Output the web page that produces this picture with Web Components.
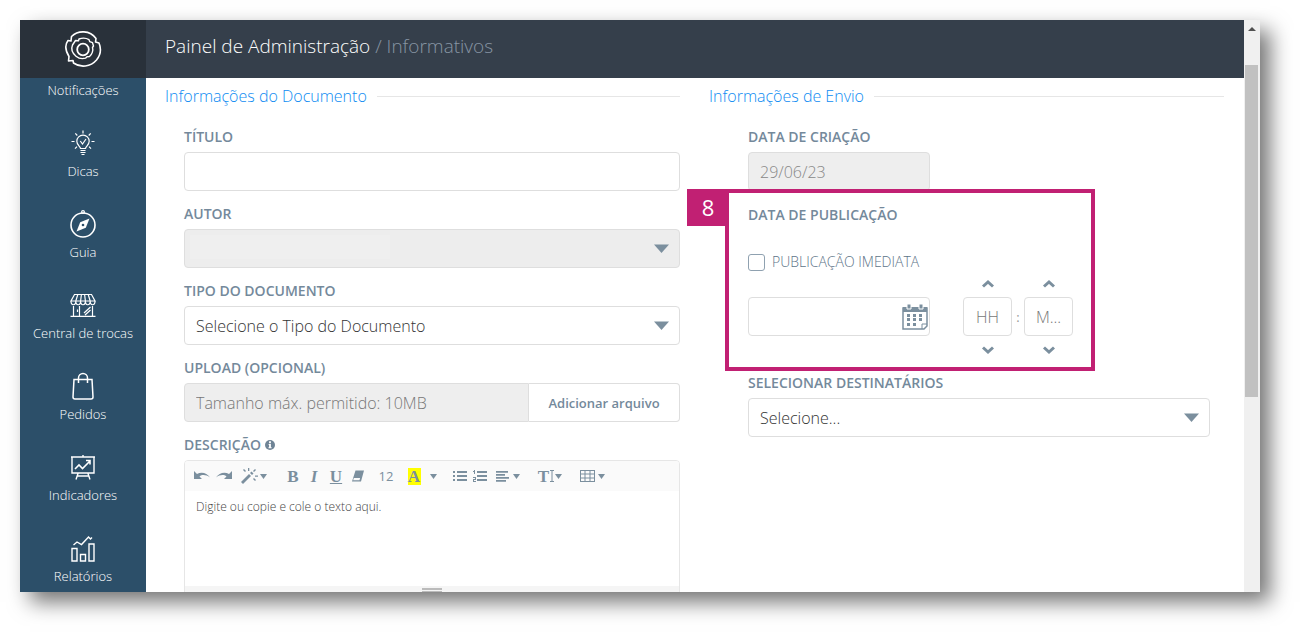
<!DOCTYPE html>
<html lang="pt-BR">
<head>
<meta charset="utf-8">
<title>Painel de Administração</title>
<style>
  body {
    margin: 0;
    padding: 20px 40px 40px 20px;
    box-sizing: border-box;
    height: 100vh;
    overflow: hidden;
    background: #fff;
    font-family: "Open Sans", "Noto Sans", sans-serif;
    color: #555;
  }
</style>
</head>
<body>
  <admin-panel>
    <side-bar slot="sidebar">
      <nav-item label="Notificações"></nav-item>
      <nav-item label="Dicas" icon="dicas"></nav-item>
      <nav-item label="Guia" icon="guia"></nav-item>
      <nav-item label="Central de trocas" icon="trocas"></nav-item>
      <nav-item label="Pedidos" icon="pedidos"></nav-item>
      <nav-item label="Indicadores" icon="indicadores"></nav-item>
      <nav-item label="Relatórios" icon="relatorios"></nav-item>
    </side-bar>
    <page-header slot="header" section="Painel de Administração" page="Informativos"></page-header>
    <form-section titulo="Informações do Documento">
      <text-field label="TÍTULO"></text-field>
      <select-field label="AUTOR" disabled></select-field>
      <select-field label="TIPO DO DOCUMENTO" option="Selecione o Tipo do Documento"></select-field>
      <upload-field label="UPLOAD (OPCIONAL)"></upload-field>
      <editor-field label="DESCRIÇÃO"></editor-field>
    </form-section>
    <form-section titulo="Informações de Envio" class="inset">
      <text-field label="DATA DE CRIAÇÃO" value="29/06/23" class="short" disabled></text-field>
      <call-out number="8">
        <publish-date></publish-date>
      </call-out>
      <select-field label="SELECIONAR DESTINATÁRIOS" option="Selecione..."></select-field>
    </form-section>
  </admin-panel>

<script>
  // Estilos comunes a todos los campos del formulario
  const fieldStyles = `
    :host { display: block; }
    * { box-sizing: border-box; }
    label, .label {
      display: block;
      margin-bottom: 6px;
      font-size: 14px;
      font-weight: 600;
      line-height: 18px;
      color: #74899b;
    }
    input, select, button { font-family: inherit; }
    .control {
      display: block;
      width: 100%;
      height: 39px;
      padding: 0 11px;
      border: 1px solid #dedede;
      border-radius: 4px;
      background: #fff;
      font-size: 16px;
      font-weight: 300;
      color: #333;
      outline: none;
    }
    .control::placeholder { color: #777; opacity: 1; }
    .control:disabled { background: #eee; color: #888; opacity: 1; }
  `;

  const navIcons = {
    dicas: `<path d="M12.5 20.5c0-2-3.700-3.400-3.700-7.200a6.200 6.200 0 0 1 12.400 0c0 3.800-3.700 5.200-3.700 7.200z"/>
      <path d="M12.300 13l2.200 3 3.500-5M12.500 22.500h5M12.500 24.500h5M13.500 26.500h3"/>
      <path d="M15 2.500v3M7.300 5.300l2 2.200M22.700 5.300l-2 2.200M3.500 13.500h3M23.500 13.500h3M7 20.700l2-2M23 20.700l-2-2"/>`,
    guia: `<circle cx="15" cy="16" r="12" stroke-width="1.600"/><circle cx="15" cy="3" r="1.400"/>
      <path d="M21.500 9.500l-3.700 9.300-9.300 3.700 3.700-9.300z" fill="#fff" stroke="none"/>
      <circle cx="15" cy="16" r="1.300" fill="#2c4f69" stroke="none"/>`,
    trocas: `<path d="M6.500 4.500h17l3.500 6.500H3zM3 11c0 5 4.800 5 4.800 0 0 5 4.800 5 4.800 0 0 5 4.800 5 4.800 0 0 5 4.800 5 4.800 0 0 5 4.800 5 4.800 0"/>
      <path d="M7.800 11l2-6.500M12.600 11l.8-6.500M17.400 11l-.8-6.500M22.200 11l-2-6.500M5.500 16v10M11.500 16v10M24.500 16v10M2.500 26.300h25M9.500 19.500v2.500M16 23l6.500-6M17 25l5.500-5"/>`,
    pedidos: `<path d="M6 8.500h18l1 17.500a2 2 0 0 1-2 2H7a2 2 0 0 1-2-2z" stroke-width="1.500"/>
      <path d="M10.500 12V7a4.500 4.500 0 0 1 9 0v5" stroke-width="1.500"/>`,
    indicadores: `<path d="M3 5h24M4 5v16h22V5M15 3v2M10 21.500l-2 6M20 21.500l2 6M9.500 24h11" stroke-width="1.400"/>
      <path d="M7 17l4-4 3.500 3.500 7.500-7.500M18 8.500h4v4" stroke-width="1.600"/>`,
    relatorios: `<path d="M4 15.500h5V28H4zM12.500 21.500h5V28h-5zM21 11h5v17h-5z" stroke-width="1.400"/>
      <path d="M5.500 12l3.500-3 4.500 2.500 7-7.500 2 2 1.500-1.500" stroke-width="1.400"/>`
  };

  class AdminPanel extends HTMLElement {
    constructor() {
      super();
      this.attachShadow({ mode: "open" });
    }

    connectedCallback() {
      this.shadowRoot.innerHTML = `
        <style>
          :host {
            display: grid;
            grid-template-columns: 126px minmax(0, 1fr) 16px;
            grid-template-rows: 58px minmax(0, 1fr);
            height: 100%;
            overflow: hidden;
            background: #fff;
            box-shadow: 10px 10px 20px rgba(0, 0, 0, 0.55);
          }
          ::slotted([slot="sidebar"]) { grid-row: 1 / 3; }
          main {
            grid-column: 2;
            display: grid;
            grid-template-columns: repeat(2, minmax(0, 1fr));
            gap: 29px;
            padding: 6px 20px 0 19px;
            overflow: hidden;
          }
          scroll-rail { grid-column: 3; grid-row: 1 / 3; }
        </style>
        <slot name="sidebar"></slot>
        <slot name="header"></slot>
        <main><slot></slot></main>
        <scroll-rail></scroll-rail>
      `;
    }
  }

  class SideBar extends HTMLElement {
    constructor() {
      super();
      this.attachShadow({ mode: "open" });
    }

    connectedCallback() {
      this.shadowRoot.innerHTML = `
        <style>
          :host { display: block; background: #2c4f69; overflow: hidden; }
          .logo {
            display: flex;
            align-items: center;
            justify-content: center;
            height: 58px;
            background: #29313a;
          }
          nav { padding-top: 3px; }
        </style>
        <a class="logo" href="#" aria-label="Início">
          <svg width="38" height="38" viewBox="0 0 38 38" fill="none" stroke="#fff" stroke-width="1.600" stroke-linejoin="round">
            <path d="M7.500 6.500C14 0 26 0 32 8.500l-.5 3.500 3.500 1c2.500 6 1.500 12-2.500 17-6 7-16 8-23 3l-.5-2.500-4.500.5.500-4.500C1 20 1 14.500 4 10.500l3 .5z"/>
            <path d="M15 9c4-1.500 7-1.200 10 .7l.8 2 2.700 1 1 3.300-1 1.500c1 3-.5 7-3 9l-2.500.2-1.500 1.500c-3.500 1-6.500.5-9.500-2-3.500-3-5-7.500-3.500-11.200l3-4.500 3 .3z" stroke-width="1.400"/>
            <circle cx="19" cy="19.500" r="5.800" stroke-width="1.800"/>
          </svg>
        </a>
        <nav><slot></slot></nav>
      `;
    }
  }

  class NavItem extends HTMLElement {
    constructor() {
      super();
      this.attachShadow({ mode: "open" });
    }

    connectedCallback() {
      const icon = this.getAttribute("icon");
      this.shadowRoot.innerHTML = `
        <style>
          :host { display: block; }
          a {
            display: flex;
            flex-direction: column;
            align-items: center;
            gap: 4px;
            color: #fff;
            font-size: 13px;
            font-weight: 300;
            line-height: 18px;
            text-decoration: none;
            white-space: nowrap;
          }
          svg { margin-top: 29px; }
        </style>
        <a href="#">
          ${icon ? `<svg width="30" height="30" viewBox="0 0 30 30" fill="none" stroke="#fff" stroke-width="1.200">${navIcons[icon]}</svg>` : ""}
          <span>${this.getAttribute("label")}</span>
        </a>
      `;
    }
  }

  class PageHeader extends HTMLElement {
    constructor() {
      super();
      this.attachShadow({ mode: "open" });
    }

    connectedCallback() {
      this.shadowRoot.innerHTML = `
        <style>
          :host {
            display: flex;
            align-items: center;
            padding: 0 19px 6px;
            background: #353f4b;
          }
          h1 { margin: 0; font-size: 19px; font-weight: 300; line-height: 26px; color: #fff; }
          span { color: #8795a3; }
        </style>
        <h1>${this.getAttribute("section")} <span>/ ${this.getAttribute("page")}</span></h1>
      `;
    }
  }

  class ScrollRail extends HTMLElement {
    constructor() {
      super();
      this.attachShadow({ mode: "open" });
    }

    connectedCallback() {
      this.shadowRoot.innerHTML = `
        <style>
          :host { display: flex; flex-direction: column; background: #f0f0f0; }
          svg { display: block; margin: 6px auto 32px 4px; }
          .thumb { height: 58%; margin: 0 2px 0 1px; background: #c1c1c1; }
        </style>
        <svg width="8" height="7" viewBox="0 0 8 7"><path d="M4 1l4 4H0z" fill="#505050"/></svg>
        <div class="thumb"></div>
      `;
    }
  }

  class FormSection extends HTMLElement {
    constructor() {
      super();
      this.attachShadow({ mode: "open" });
    }

    connectedCallback() {
      this.shadowRoot.innerHTML = `
        <style>
          :host { display: block; }
          h2 {
            display: flex;
            align-items: center;
            gap: 10px;
            margin: 0 0 20px;
            font-size: 16px;
            font-weight: 300;
            line-height: 24px;
            color: #0d8bf2;
          }
          h2::after { content: ""; flex: 1; height: 1px; background: #e6e6e6; }
          .fields { display: flex; flex-direction: column; gap: 14px; padding-left: 19px; }
          :host(.inset) .fields { gap: 15px; padding: 0 14px 0 39px; }
          ::slotted(.short) { width: 182px; }
        </style>
        <h2>${this.getAttribute("titulo")}</h2>
        <div class="fields"><slot></slot></div>
      `;
    }
  }

  class TextField extends HTMLElement {
    constructor() {
      super();
      this.attachShadow({ mode: "open" });
    }

    connectedCallback() {
      this.shadowRoot.innerHTML = `
        <style>${fieldStyles}</style>
        <label for="campo">${this.getAttribute("label")}</label>
        <input id="campo" class="control" type="text" value="${this.getAttribute("value") || ""}"
          ${this.hasAttribute("disabled") ? "disabled" : ""}>
      `;
    }
  }

  class SelectField extends HTMLElement {
    constructor() {
      super();
      this.attachShadow({ mode: "open" });
    }

    connectedCallback() {
      this.shadowRoot.innerHTML = `
        <style>
          ${fieldStyles}
          .wrap { display: grid; align-items: center; }
          .wrap > * { grid-area: 1 / 1; }
          select { appearance: none; }
          .control:disabled {
            background: linear-gradient(#efefef, #efefef) 5px 5px / 200px 24px no-repeat #ededed;
          }
          svg { justify-self: end; margin-right: 11px; pointer-events: none; }
        </style>
        <label for="campo">${this.getAttribute("label")}</label>
        <div class="wrap">
          <select id="campo" class="control" ${this.hasAttribute("disabled") ? "disabled" : ""}>
            <option>${this.getAttribute("option") || ""}</option>
          </select>
          <svg width="15" height="9" viewBox="0 0 15 9"><path d="M0 .5h15L7.500 9z" fill="#7b8f9e"/></svg>
        </div>
      `;
    }
  }

  class UploadField extends HTMLElement {
    constructor() {
      super();
      this.attachShadow({ mode: "open" });
    }

    connectedCallback() {
      this.shadowRoot.innerHTML = `
        <style>
          ${fieldStyles}
          .wrap { display: flex; }
          input.control { flex: 1; min-width: 0; border-radius: 4px 0 0 4px; }
          button.control {
            width: 151px;
            border-left: 0;
            border-radius: 0 4px 4px 0;
            font-size: 13px;
            font-weight: 600;
            color: #74899b;
          }
        </style>
        <label for="arquivo">${this.getAttribute("label")}</label>
        <div class="wrap">
          <input id="arquivo" class="control" type="text" placeholder="Tamanho máx. permitido: 10MB" disabled>
          <button class="control" type="button">Adicionar arquivo</button>
        </div>
      `;
    }
  }

  class EditorField extends HTMLElement {
    constructor() {
      super();
      this.attachShadow({ mode: "open" });

      const caret = (x) => `<path d="M${x} 6h7l-3.500 5z"/>`;

      // Grupos de la barra: nombre, ancho del botón y dibujo
      this.groups = [
        [
          ["Desfazer", 22, `<svg width="16" height="16"><path d="M0 3v8h8L5.500 8.500C8 6.500 12 6.500 16 9.500 13 4.500 7 3.500 3 6z"/></svg>`],
          ["Refazer", 22, `<svg width="16" height="16"><path d="M16 3v8H8l2.500-2.500C8 6.500 4 6.500 0 9.500 3 4.500 9 3.500 13 6z"/></svg>`],
          ["Estilo", 38, `<svg width="26" height="16"><path d="M0 14l8-8 2 2-8 8zM9 5l1.500-1.500 2 2L11 7zM7 0h1.300v3H7zM2 2l1-1 2 2-1 1zM12 3l2-2 1 1-2 2zM14 7.500h3v1.300h-3zM12 11l1-1 2 2-1 1z"/>${caret(19)}</svg>`]
        ],
        [
          ["Negrito", 20, `<b>B</b>`],
          ["Itálico", 22, `<b><i>I</i></b>`],
          ["Sublinhado", 22, `<b><u>U</u></b>`],
          ["Limpar formatação", 22, `<svg width="12" height="16"><path d="M3.500 2.500H12L9 13.500H0zM1.800 10L1.200 12.300h6.300l.6-2.300z" fill-rule="evenodd"/></svg>`],
          ["Tamanho da fonte", 34, `<span class="size">12</span>`],
          ["Cor", 22, `<b class="mark">A</b>`],
          ["Mais cores", 16, `<svg width="7" height="16">${caret(0)}</svg>`]
        ],
        [
          ["Lista", 18, `<svg width="14" height="16"><path d="M0 3h2v2H0zM4 3h10v2H4zM0 7h2v2H0zM4 7h10v2H4zM0 11h2v2H0zM4 11h10v2H4z"/></svg>`],
          ["Lista numerada", 22, `<svg width="14" height="16"><path d="M4 3h10v2H4zM4 7h10v2H4zM4 11h10v2H4zM1 2h1v4H1zM0 3h1v1H0zM0 9h3v3H1v1h2v1H0v-3h2v-1H0z"/></svg>`],
          ["Parágrafo", 34, `<svg width="24" height="16"><path d="M0 3h12v1.800H0zM0 6h9v1.800H0zM0 9h13v1.800H0zM0 12h10v1.800H0z"/>${caret(17)}</svg>`]
        ],
        [
          ["Altura da linha", 30, `<b>T</b><svg width="13" height="16"><path d="M1 2h4v1H3.500v10H5v1H1v-1h1.500V3H1z"/>${caret(6)}</svg>`]
        ],
        [
          ["Tabela", 34, `<svg width="25" height="16"><path d="M0 2h15v12H0zM1 3v2.500h3.500V3zM5.500 3v2.500h4V3zM10.500 3v2.500H14V3zM1 6.500v3h3.500v-3zM5.500 6.500v3h4v-3zM10.500 6.500v3H14v-3zM1 10.500V13h3.500v-2.500zM5.500 10.500V13h4v-2.500zM10.500 10.500V13H14v-2.500z" fill-rule="evenodd"/>${caret(18)}</svg>`]
        ]
      ];
    }

    connectedCallback() {
      this.shadowRoot.innerHTML = `
        <style>
          ${fieldStyles}
          .label { display: flex; align-items: center; gap: 4px; }
          .editor { border: 1px solid #e6e6e6; border-radius: 4px; overflow: hidden; }
          .toolbar {
            display: flex;
            gap: 10px;
            height: 30px;
            padding-left: 6px;
            background: #fafafa;
          }
          .group { display: flex; }
          button {
            display: flex;
            align-items: center;
            justify-content: center;
            padding: 0;
            border: 0;
            background: none;
            color: #7b8f9e;
          }
          button svg { flex: none; fill: #7b8f9e; }
          b { font-family: "Liberation Serif", serif; font-size: 17px; line-height: 17px; }
          .size { font-size: 13px; line-height: 17px; }
          .mark { width: 13px; background: #ff0; }
          .text {
            height: 95px;
            padding: 6px 11px;
            font-size: 12px;
            font-weight: 300;
            line-height: 20px;
            color: #444;
            outline: none;
          }
          .resize { height: 9px; padding-top: 2px; background: #f5f5f5; }
          .resize::after {
            content: "";
            display: block;
            width: 20px;
            height: 1px;
            margin: 0 auto;
            border: solid #bbb;
            border-width: 2px 0 1px;
          }
        </style>
        <div class="label" id="rotulo">${this.getAttribute("label")}
          <svg width="10" height="10" viewBox="0 0 11 11"><circle cx="5.500" cy="5.500" r="5.500" fill="#6f8496"/><path d="M4.500 1.500h2v2h-2zM4 4.500h2.500V8H7.300v1.200H3.800V8h.7V5.600H4z" fill="#fff"/></svg>
        </div>
        <div class="editor">
          <div class="toolbar">
            ${this.groups.map(group => `
              <div class="group">
                ${group.map(([name, width, art]) => `<button type="button" aria-label="${name}" style="width:${width}px">${art}</button>`).join("")}
              </div>
            `).join("")}
          </div>
          <div class="text" contenteditable="true" role="textbox" aria-labelledby="rotulo">Digite ou copie e cole o texto aqui.</div>
          <div class="resize"></div>
        </div>
      `;
    }
  }

  class PublishDate extends HTMLElement {
    constructor() {
      super();
      this.attachShadow({ mode: "open" });
    }

    spinner(name, hint) {
      return `
        <div class="spinner">
          <button type="button" aria-label="Aumentar ${name}"><svg width="14" height="9"><path d="M2 7.500L7 3l5 4.500"/></svg></button>
          <input class="control" type="text" placeholder="${hint}" aria-label="${name}">
          <button type="button" aria-label="Diminuir ${name}"><svg width="14" height="9"><path d="M2 1.500L7 6l5-4.500"/></svg></button>
        </div>
      `;
    }

    connectedCallback() {
      this.shadowRoot.innerHTML = `
        <style>
          ${fieldStyles}
          .check {
            display: flex;
            align-items: center;
            gap: 7px;
            margin: 29px 0 5px;
            font-weight: 300;
            color: #5d7488;
          }
          .check input {
            appearance: none;
            width: 17px;
            height: 17px;
            margin: 0;
            border: 1px solid #8fa1b0;
            border-radius: 3px;
          }
          .row { display: flex; align-items: center; }
          .date { display: grid; width: 182px; align-items: center; margin-right: 33px; }
          .date > * { grid-area: 1 / 1; }
          .date svg { justify-self: end; margin-right: 2px; }
          .spinner { display: flex; flex-direction: column; gap: 7px; width: 49px; }
          .spinner .control { padding: 0 5px; text-align: center; }
          .spinner button {
            display: flex;
            align-items: center;
            justify-content: center;
            height: 14px;
            padding: 0;
            border: 0;
            background: none;
          }
          .spinner svg { fill: none; stroke: #7b8f9e; stroke-width: 3; }
          .colon { width: 12px; text-align: center; font-size: 13px; color: #999; }
        </style>
        <label class="label" for="data">DATA DE PUBLICAÇÃO</label>
        <label class="check"><input type="checkbox">PUBLICAÇÃO IMEDIATA</label>
        <div class="row">
          <div class="date">
            <input id="data" class="control" type="text">
            <svg width="26" height="26" viewBox="0 0 26 26">
              <path d="M1 4h24v18l-3 3H1z" fill="#fff" stroke="#7b8f9e" stroke-width="1.500"/>
              <path d="M1 3h24v5H1z" fill="#7b8f9e"/>
              <path d="M25 20h-5v5" fill="none" stroke="#7b8f9e"/>
              <path d="M5 0h4v5H5zM17 0h4v5h-4z" fill="#7b8f9e" stroke="#fff"/>
              <path d="M11 10h3v3h-3zM17 10h3v3h-3zM5 14h3v3H5zM11 14h3v3h-3zM17 14h3v3h-3zM5 19h3v3H5zM11 19h3v3h-3zM5 10h3v3H5z" fill="#7b8f9e"/>
            </svg>
          </div>
          ${this.spinner("horas", "HH")}
          <span class="colon">:</span>
          ${this.spinner("minutos", "M...")}
        </div>
      `;
    }
  }

  // Marco numerado que resalta un bloque del formulario
  class CallOut extends HTMLElement {
    constructor() {
      super();
      this.attachShadow({ mode: "open" });
    }

    connectedCallback() {
      this.shadowRoot.innerHTML = `
        <style>
          :host { display: block; position: relative; width: 325px; padding-bottom: 2px; }
          .frame {
            position: absolute;
            inset: -17px -22px -12px -23px;
            border: 4px solid #c12073;
            pointer-events: none;
          }
          .number {
            position: absolute;
            top: -17px;
            left: -61px;
            width: 42px;
            background: #c12073;
            color: #fff;
            font-size: 22px;
            font-weight: 500;
            line-height: 37px;
            text-align: center;
          }
        </style>
        <slot></slot>
        <div class="frame"></div>
        <div class="number">${this.getAttribute("number")}</div>
      `;
    }
  }

  customElements.define("nav-item", NavItem);
  customElements.define("side-bar", SideBar);
  customElements.define("page-header", PageHeader);
  customElements.define("scroll-rail", ScrollRail);
  customElements.define("text-field", TextField);
  customElements.define("select-field", SelectField);
  customElements.define("upload-field", UploadField);
  customElements.define("editor-field", EditorField);
  customElements.define("publish-date", PublishDate);
  customElements.define("call-out", CallOut);
  customElements.define("form-section", FormSection);
  customElements.define("admin-panel", AdminPanel);
</script>
</body>
</html>
